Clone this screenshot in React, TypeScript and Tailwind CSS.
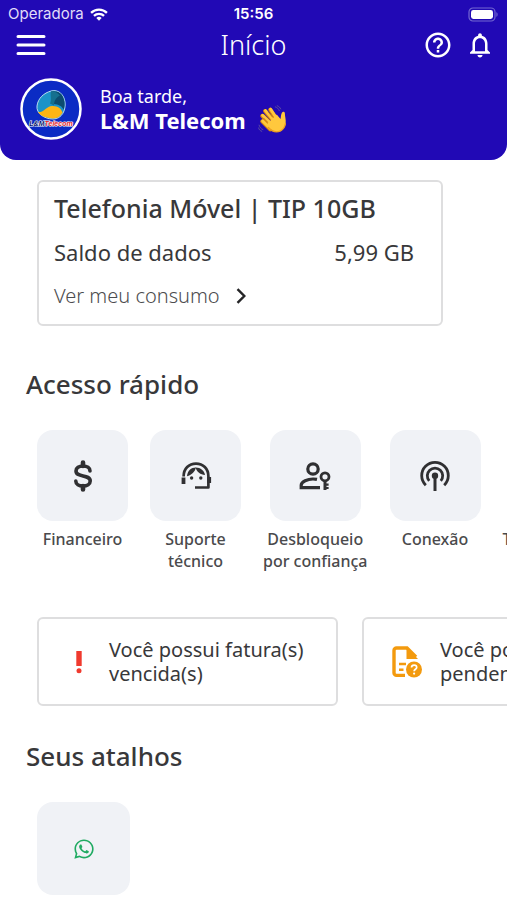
import React from 'react';
import { FaWhatsapp } from 'react-icons/fa';
import { MdHelpOutline, MdNotificationsNone } from 'react-icons/md';

type IconProps = { className?: string };

const WifiIcon: React.FC<IconProps> = ({ className }) => (
    <svg viewBox="0 0 20 14" className={className} fill="none" stroke="currentColor" strokeWidth="2.6">
        <path d="M1.2 5.2a12.6 12.6 0 0 1 17.6 0" />
        <path d="M4.4 8.6a8 8 0 0 1 11.2 0" />
        <path d="M7 10.9a4.4 4.4 0 0 1 6 0L10 14Z" fill="currentColor" stroke="none" />
    </svg>
);

const BatteryIcon: React.FC<IconProps> = ({ className }) => (
    <svg viewBox="0 0 31 15" className={className}>
        <rect x="1" y="1" width="26" height="13" rx="4" fill="none" stroke="#7468d2" strokeWidth="1.2" />
        <rect x="3" y="3" width="22" height="9" rx="2.4" fill="white" />
        <path d="M28.4 5.2c1.6.5 1.6 4.1 0 4.6Z" fill="#7468d2" />
    </svg>
);

const MenuIcon: React.FC<IconProps> = ({ className }) => (
    <svg viewBox="0 0 30 22" className={className} stroke="currentColor" strokeWidth="3" strokeLinecap="round">
        <path d="M2 2.5h26M2 11h26M2 19.5h26" />
    </svg>
);

const CompanyLogo: React.FC<IconProps> = ({ className }) => (
    <svg viewBox="0 0 62 62" className={className} role="img" aria-label="L&M Telecom">
        <circle cx="31" cy="31" r="29.5" fill="#0b2bc4" stroke="white" strokeWidth="2.5" />
        <path d="M31 13c8-2 13 4 14 11 1 8-3 17-12 17S16 35 17 28c1-8 7-13 14-15Z" fill="#1b93c9" stroke="#b9dcef" strokeWidth="1" />
        <path d="M31 13.6c8-1.8 12.5 3 13.5 10.5.4 2.6 0 5.3-.8 7.600-3-5.400-7-5.200-11.700-5.700-1.400-4 .3-7-1-12.400Z" fill="#0c4c70" />
        <path d="M31 13.600c-1 4 1 8-1 12l4 2c0-5 2-8 6-10-3-4-6-4.500-9-4Z" fill="#15708f" />
        <path d="M18 34c6 1 9-7 15-6 5 .5 8 2 9.500 6.500C40 39 37 40.400 33 40.400S20 38.500 18 34Z" fill="#fdb515" />
        <text x="31" y="48" textAnchor="middle" fontFamily="Liberation Sans" fontSize="7" fontWeight="bold" fontStyle="italic" fill="#07126b" stroke="white" strokeWidth="1.2" paintOrder="stroke">
            L&amp;M<tspan fill="#e3242b">Telecom</tspan>
        </text>
    </svg>
);

const WavingHand: React.FC<IconProps> = ({ className }) => (
    <svg viewBox="0 0 32 32" className={className} fill="none" strokeLinecap="round" strokeLinejoin="round">
        <path d="M13 26 4.500 17.500M15 22 4.500 11.500M18 19 7.500 6.500M21 17 13 5" stroke="#d9890f" strokeWidth="4.2" />
        <path d="M13 25 5 17M15 21 5 11M18 18 8 6M21 16 13.500 4.500" stroke="#ffc83d" strokeWidth="3.2" />
        <path d="M9 21 20 10l4 5c.6-2.500.3-5 1.500-6.800 1-1.500 3.300-1 3.200 1-.1 2.800 1.300 6 .8 10.300-.5 4.500-3.500 8.500-8 9.300-5 .8-8.300-3.600-12.500-7.800Z" fill="#ffc83d" />
        <path d="M11 24c5 5.500 9 5.500 13 3.600 3-1.600 4.700-4.400 5.200-7.600" stroke="#eb9d22" strokeWidth="1.5" />
        <path d="M10 18 6 14M12.500 15.500 8 10.500M15.500 13 11 7.500" stroke="#b06c15" strokeWidth=".8" />
        <path d="M18.500 2c2 .6 3.500 2 4.200 4M20.500.8c1.800.6 3 1.800 3.700 3.400M1.200 21.500c.5 2.300 2 4 4 4.700M.6 24.500c.5 1.700 1.600 3 3.400 3.600" stroke="#5d4fa0" strokeWidth="1" />
    </svg>
);

const DollarIcon: React.FC<IconProps> = ({ className }) => (
    <svg viewBox="0 0 24 32" className={className} fill="none" stroke="currentColor" strokeWidth="3.6" strokeLinecap="round">
        <path d="M19 11c0-3.200-3-5-7-5s-7 1.700-7 4.900C5 18 19.200 13.800 19.200 21c0 3.200-3.200 5-7.200 5s-7.200-1.800-7.200-5" />
        <path d="M12 2.500V6M12 26v3.500" strokeWidth="4.6" />
    </svg>
);

const SupportAgentIcon: React.FC<IconProps> = ({ className }) => (
    <svg viewBox="0 0 32 32" className={className} fill="none" stroke="currentColor">
        <path d="M3.600 16.500C3.600 8.500 9 3.600 16 3.600s12.400 4.900 12.400 12.900v11H15" strokeWidth="2.7" strokeLinejoin="round" />
        <path d="M3.500 17.500v6.500M29.200 17v6" strokeWidth="3.8" />
        <path d="M7 16.200C7.500 10.500 11 7.500 16 7.400c-1 4.200-4.500 7.600-9 8.800Z" fill="currentColor" stroke="none" />
        <path d="M15.500 7.400c5-.1 8.800 3.100 9.500 7.600-4.500-.4-8.300-3.200-9.500-7.600Z" fill="currentColor" stroke="none" />
        <circle cx="11.600" cy="18" r="1.700" fill="currentColor" stroke="none" />
        <circle cx="20.800" cy="18" r="1.700" fill="currentColor" stroke="none" />
    </svg>
);

const AccountKeyIcon: React.FC<IconProps> = ({ className }) => (
    <svg viewBox="0 0 32 28" className={className} fill="none" stroke="currentColor" strokeWidth="3.2">
        <circle cx="14" cy="7" r="5.2" />
        <path d="M18 17.400c-1.300-.3-2.700-.4-4-.4-5.200 0-11.800 2.500-11.800 6.200v2.500H21" />
        <circle cx="26" cy="14.800" r="4" strokeWidth="2.8" />
        <path d="M26 19v9" strokeWidth="3" />
        <path d="M27 22.600h2.600M27 26h2.600" strokeWidth="2.2" />
    </svg>
);

const AntennaIcon: React.FC<IconProps> = ({ className }) => (
    <svg viewBox="0 0 32 32" className={className} fill="none" stroke="currentColor" strokeWidth="2.8">
        <path d="M6.800 25.200a13.300 13.300 0 1 1 18.400 0" />
        <path d="M10.200 20.800a7.700 7.700 0 1 1 11.600 0" />
        <circle cx="16" cy="15.800" r="3.2" fill="currentColor" stroke="none" />
        <path d="M16 16v15" strokeWidth="3" />
    </svg>
);

const OverdueIcon: React.FC<IconProps> = ({ className }) => (
    <svg viewBox="0 0 8 24" className={className} fill="currentColor">
        <path d="M1.300 1h5.400v15H1.300z" />
        <circle cx="4" cy="20.800" r="2.5" />
    </svg>
);

const PendingIcon: React.FC<IconProps> = ({ className }) => (
    <svg viewBox="0 0 30 32" className={className} fill="none" stroke="currentColor">
        <path d="M13 29.400H4.500a2.500 2.500 0 0 1-2.500-2.500V4.500A2.500 2.500 0 0 1 4.500 2H15l9 9" strokeWidth="3.4" />
        <path d="M14.500 1.500 26 13H14.500Z" fill="currentColor" stroke="none" />
        <path d="M7 18h7M7 23.800h4.500" strokeWidth="2.6" />
        <circle cx="22" cy="23.500" r="8" fill="currentColor" stroke="none" />
        <path d="M19.500 21.600c0-3.400 5.200-3.200 5.200-.2 0 1.800-2.600 2-2.600 3.900" stroke="white" strokeWidth="1.7" />
        <circle cx="22.100" cy="27.600" r="1.1" fill="white" stroke="none" />
    </svg>
);

const QUICK_ACCESS = [
    { label: <>Financeiro</>, icon: <DollarIcon className="w-6 h-8" /> },
    { label: <>Suporte<br />técnico</>, icon: <SupportAgentIcon className="size-8" /> },
    { label: <>Desbloqueio<br />por confiança</>, icon: <AccountKeyIcon className="w-8 h-7" /> },
    { label: <>Conexão</>, icon: <AntennaIcon className="size-8" /> },
    { label: <>Teste de conexão</>, icon: <WifiIcon className="w-8 h-6" /> },
];

const ALERTS = [
    { text: 'Você possui fatura(s) vencida(s)', icon: <OverdueIcon className="w-7 h-6 text-[#f03a2e]" /> },
    { text: 'Você possui fatura(s) pendente(s)', icon: <PendingIcon className="w-[34px] h-8 text-[#f39a0e]" /> },
];

const Header: React.FC = () => (
    <header className="bg-[#2109b5] text-white rounded-b-2xl pb-5">
        <div className="grid grid-cols-3 items-center h-7 px-2 font-[Inter,sans-serif] text-[15px]">
            <div className="flex items-center gap-[6px] text-[#e0dcf8]">
                Operadora
                <WifiIcon className="w-[18px] h-[13px] text-white" />
            </div>
            <span className="text-center font-semibold">15:56</span>
            <BatteryIcon className="w-[31px] h-[15px] justify-self-end" />
        </div>
        <nav className="grid grid-cols-3 items-center h-[34px] px-4">
            <button aria-label="Menu" className="justify-self-start">
                <MenuIcon className="w-[30px] h-[22px]" />
            </button>
            <h1 className="text-center text-[27px] leading-8 font-light">Início</h1>
            <div className="flex justify-end gap-3">
                <button aria-label="Ajuda"><MdHelpOutline className="size-[30px]" /></button>
                <button aria-label="Notificações" className="-mr-1"><MdNotificationsNone className="size-[30px]" /></button>
            </div>
        </nav>
        <div className="flex items-center gap-[18px] mt-4 px-5">
            <CompanyLogo className="size-[62px]" />
            <div className="pb-[2px]">
                <p className="text-lg leading-6">Boa tarde,</p>
                <div className="flex items-center gap-3 h-6">
                    <strong className="text-[22px] leading-6 font-bold">L&amp;M Telecom</strong>
                    <WavingHand className="size-[30px]" />
                </div>
            </div>
        </div>
    </header>
);

const App: React.FC = () => {
    return (
        <div className="overflow-hidden bg-white font-['Noto_Sans',sans-serif] text-[#38383a]">
            <Header />
            <main>
                <section className="mt-5 ml-[37px] mr-16 h-[146px] rounded-md border-2 border-[#dededf] px-[15px] pt-[10px]">
                    <h2 className="text-[25px] leading-8 font-medium whitespace-nowrap">Telefonia Móvel | TIP 10GB</h2>
                    <div className="flex justify-between mt-3 pr-3 text-[22px] leading-8">
                        <span>Saldo de dados</span>
                        <span>5,99 GB</span>
                    </div>
                    <a href="#consumo" className="flex items-center gap-4 mt-3 text-xl leading-8 font-light text-[#4c4c4e]">
                        Ver meu consumo
                        <svg viewBox="0 0 10 16" className="w-[10px] h-4 text-[#252527]" fill="none" stroke="currentColor" strokeWidth="2.4">
                            <path d="m1.500 1.200 6.800 6.800-6.800 6.800" />
                        </svg>
                    </a>
                </section>

                <h2 className="mt-[42px] pl-[26px] text-[26px] leading-8 font-medium">Acesso rápido</h2>
                <div className="flex gap-[22px] h-[156px] mt-[30px] pl-[37px]">
                    {QUICK_ACCESS.map((item, index) => (
                        <button key={index} className="flex flex-col items-center shrink-0">
                            <span className="flex items-center justify-center size-[91px] rounded-2xl bg-[#f0f2f6] text-[#303032]">
                                {item.icon}
                            </span>
                            <span className="mt-[7px] text-base leading-[22px] font-medium text-[#4a4a4c] whitespace-nowrap">
                                {item.label}
                            </span>
                        </button>
                    ))}
                </div>

                <div className="flex gap-6 mt-[31px] pl-[37px]">
                    {ALERTS.map((alert, index) => (
                        <button key={index} className="flex items-center gap-4 shrink-0 w-[301px] h-[89px] rounded-md border-2 border-[#dededf] pl-[26px] pr-1 text-left">
                            {alert.icon}
                            <span className="flex-1 text-xl leading-6">{alert.text}</span>
                        </button>
                    ))}
                </div>

                <h2 className="mt-[34px] pl-[26px] text-[26px] leading-8 font-medium">Seus atalhos</h2>
                <div className="flex mt-[30px] pl-[37px] pb-1">
                    <button aria-label="WhatsApp" className="flex items-center justify-center size-[93px] rounded-2xl bg-[#f0f2f6]">
                        <FaWhatsapp className="size-[22px] text-[#1faa61]" />
                    </button>
                </div>
            </main>
        </div>
    );
};

export default App;
